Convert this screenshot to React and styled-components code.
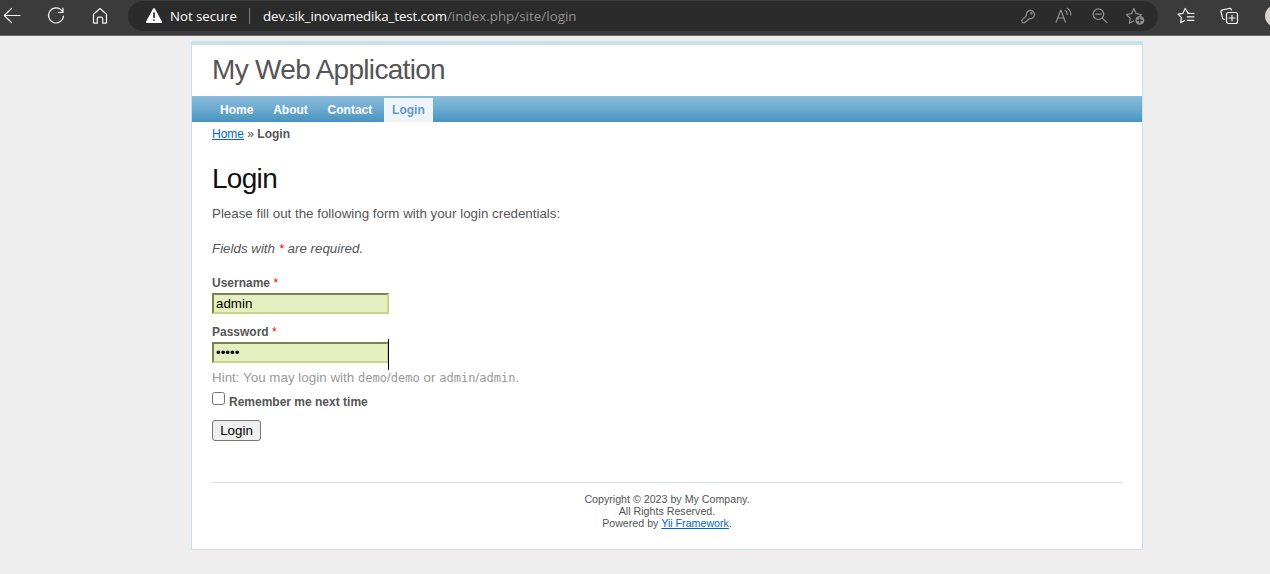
import React from "react";
import styled, { createGlobalStyle } from "styled-components";

const GlobalStyle = createGlobalStyle`
  *, *::before, *::after { box-sizing: border-box; }
  html, body { margin: 0; padding: 0; background: #eeeeee; overflow: hidden; }
  body {
    font: normal 13.333px/18px Arial, "Liberation Sans", sans-serif;
    color: #555555;
  }
`;

const Toolbar = styled.header`
  display: flex;
  align-items: flex-start;
  height: 36px;
  width: 1270px;
  overflow: hidden;
  background: #3b3b3b;
  border-bottom: 1px solid #6a6669;
  color: #ffffff;
`;

const NavIcons = styled.div`
  display: flex;
  gap: 20px;
  width: 128px;
  flex: none;
  padding-top: 4px;
`;

const Icon = styled.svg`
  display: block;
  flex: none;
  width: 24px;
  height: 24px;
  fill: none;
  stroke: ${(p) => p.$color || "#f2f2f2"};
  stroke-width: ${(p) => p.$weight || 1.2};
  stroke-linecap: round;
  stroke-linejoin: round;
`;

const AddressBar = styled.div`
  display: flex;
  flex: none;
  align-items: center;
  width: 1030px;
  height: 30px;
  margin-top: 1px;
  padding: 0 10px 0 14px;
  border-radius: 15px;
  background: #2b2b2b;
  font: 13.3px/20px "Open Sans", "Noto Sans", sans-serif;
`;

const Security = styled.span`
  width: 78px;
  margin-left: 4px;
  white-space: nowrap;
  letter-spacing: -0.06px;
`;

const Separator = styled.span`
  width: 1px;
  height: 16px;
  background: #7b7b7b;
  margin: 0 13px 0 1px;
`;

const Url = styled.span`
  flex: 1;
  white-space: nowrap;
  letter-spacing: -0.1px;
`;

const UrlPath = styled.span`
  color: #929292;
  letter-spacing: 0.05px;
`;

const BarActions = styled.div`
  display: flex;
  gap: 12px;
`;

const BrowserActions = styled.div`
  display: flex;
  flex: none;
  gap: 20px;
  padding: 4px 0 0 16px;
`;

const Avatar = styled.span`
  flex: none;
  width: 22px;
  height: 22px;
  margin-top: 1px;
  margin-left: 3px;
  border-radius: 50%;
  background: #d6d3cf;
`;

const Page = styled.main`
  width: 952px;
  height: 509px;
  margin: 5px 0 0 191px;
  background: #ffffff;
  border: 1px solid #c9e0ed;
  border-top-width: 4px;
`;

const Logo = styled.div`
  height: 51px;
  padding: 9px 20px 0;
  font-size: 28px;
  line-height: 31px;
  letter-spacing: -0.69px;
`;

const Menu = styled.nav`
  display: flex;
  align-items: flex-end;
  height: 26px;
  padding-left: 20px;
  background: linear-gradient(#8abbdb 0%, #6facd0 45%, #4794c1 100%);
`;

const MenuItem = styled.a`
  height: 24px;
  padding: 4px 8px 0;
  margin-right: 3.8px;
  font-size: 12px;
  line-height: 16px;
  font-weight: bold;
  color: ${(p) => (p.$active ? "#6399cd" : "#ffffff")};
  background: ${(p) => (p.$active ? "#eff4fa" : "transparent")};
`;

const Breadcrumbs = styled.div`
  padding: 4px 20px 0;
  height: 32px;
  font-size: 12px;
  line-height: 16px;
`;

const Link = styled.a`
  color: #0066cc;
  text-decoration: underline;
`;

const Content = styled.section`
  height: 328px;
  padding: 8px 20px 0;
`;

const Heading = styled.h1`
  margin: 0;
  height: 43px;
  font-size: 28px;
  line-height: 33px;
  letter-spacing: -0.7px;
  font-weight: normal;
  color: #111111;
`;

const Paragraph = styled.p`
  margin: 0 0 17px;
  font-style: ${(p) => (p.$note ? "italic" : "normal")};
`;

const Fields = styled.form`
  margin-top: -1px;
`;

const Row = styled.div`
  display: flex;
  flex-direction: column;
  align-items: flex-start;
  margin-bottom: ${(p) => p.$gap || 0}px;
`;

const Label = styled.label`
  font-size: 12px;
  line-height: 18px;
  font-weight: bold;
`;

const Required = styled.span`
  color: #ff0000;
  font-weight: normal;
`;

const FieldBox = styled.div`
  position: relative;
  height: 21px;
  margin-top: 1px;
`;

const Input = styled.input`
  display: block;
  width: 177px;
  height: 21px;
  margin: 0;
  padding: 1px 2px;
  border: 2px solid;
  border-color: #7a8450 #c6d880 #c6d880 #7a8450;
  border-radius: 0;
  outline: none;
  background: #e6efc2;
  color: #000000;
  font: 13.333px Arial, "Liberation Sans", sans-serif;
`;

const TextCursor = styled.span`
  position: absolute;
  top: -3px;
  left: 176px;
  width: 1px;
  height: 31px;
  background: #000000;
`;

const Hint = styled.p`
  margin: 6px 0 0;
  color: #999999;
  letter-spacing: 0.03px;
  code {
    font: 12px "DejaVu Sans Mono", monospace;
  }
`;

const CheckRow = styled.div`
  display: flex;
  align-items: flex-start;
  gap: 4px;
  height: 29px;
  margin-top: 5px;
  ${Label} { padding-top: 1px; }
`;

const Checkbox = styled.input`
  width: 13px;
  height: 13px;
  margin: 0;
`;

const Submit = styled.button`
  display: block;
  width: 49px;
  height: 21px;
  margin-top: -1px;
  padding: 0;
  border: 1px solid #767676;
  border-radius: 3px;
  background: #efefef;
  color: #000000;
  font: 13.333px/18px Arial, "Liberation Sans", sans-serif;
`;

const Footer = styled.footer`
  margin: 0 20px;
  padding-top: 10px;
  border-top: 1px solid #c9e0ed;
  font-size: 10.667px;
  line-height: 12px;
  text-align: center;
`;

const dim = "#929292";

const BrowserToolbar = () => (
  <Toolbar>
    <NavIcons>
      <Icon viewBox="0 0 24 24"><path d="M20 11.5H4.5M11.5 4.5l-7.2 7 7.2 7" /></Icon>
      <Icon viewBox="0 0 24 24"><path d="M18.2 7.2A7.5 7.5 0 1 0 19.5 12M19 4v4.5h-4.5" /></Icon>
      <Icon viewBox="0 0 24 24"><path d="M5.5 10.2 12 4.5l6.5 5.7v8.2a.8.8 0 0 1-.8.8h-3v-4.5a1.5 1.5 0 0 0-1.5-1.5h-2.4a1.5 1.5 0 0 0-1.5 1.5v4.5h-3a.8.8 0 0 1-.8-.8z" /></Icon>
    </NavIcons>
    <AddressBar>
      <Icon viewBox="0 0 24 24" $color="none">
        <path fill="#ffffff" d="M11 4.7a1.2 1.2 0 0 1 2 0l6.9 12.7a1.1 1.1 0 0 1-1 1.6H5.1a1.1 1.1 0 0 1-1-1.6z" />
        <path stroke="#2b2b2b" strokeWidth="1.7" d="M12 9v4.2M12 16v.1" />
      </Icon>
      <Security>Not secure</Security>
      <Separator />
      <Url>dev.sik_inovamedika_test.com<UrlPath>/index.php/site/login</UrlPath></Url>
      <BarActions>
        <Icon viewBox="0 0 24 24" $color={dim}>
          <path d="M10.5 11.6a4.1 4.1 0 1 1 3 2.9L9.2 18.2a2 2 0 0 1-3 .1 2 2 0 0 1 .2-2.7z" />
          <circle cx="15.5" cy="9.2" r=".6" />
        </Icon>
        <Icon viewBox="0 0 24 24" $color={dim}>
          <path d="m4.2 18 4.6-12 4.6 12M5.8 14h6M13.3 6.5c1.3 1 1.9 2.2 1.9 4M15.4 4.2c2.2 1.5 3.4 3.8 3.4 6.8" />
        </Icon>
        <Icon viewBox="0 0 24 24" $color={dim}>
          <circle cx="10.4" cy="10.2" r="5.3" /><path d="M7.8 10.2H13M14.3 14.1l4.7 4.5" />
        </Icon>
        <Icon viewBox="0 0 24 24" $color={dim}>
          <path d="m9.6 17-4.2 2.3.8-5.2-3.8-3.6 5.1-.8L9.9 4.5l2.3 5.2 5.2.8-1.5 1.4" />
          <circle cx="15.8" cy="16.3" r="4.4" fill={dim} stroke="none" />
          <path stroke="#2b2b2b" d="M13.3 16.3h5M15.8 13.8v5" />
        </Icon>
      </BarActions>
    </AddressBar>
    <BrowserActions>
      <Icon viewBox="0 0 24 24">
        <path d="M16.5 9.3h-2.2L11.2 4.5 8.8 9.4l-4.8.7 3.5 3.5-.9 5.1 3.7-2M13.8 9.5H20M13.3 12.8H20M13.3 16.3H20" />
      </Icon>
      <Icon viewBox="0 0 24 24">
        <path d="M6.5 15.5c-1 0-1.7-.5-2-1.4L3.1 8.2A2 2 0 0 1 4.5 5.8l6.7-1.3a2 2 0 0 1 2.3 1.5" />
        <rect x="8.5" y="8.5" width="11" height="11" rx="2" />
        <path d="M14 11v6M11 14h6" />
      </Icon>
      <Avatar />
    </BrowserActions>
  </Toolbar>
);

export default function App() {
  return (
    <>
      <GlobalStyle />
      <BrowserToolbar />
      <Page>
        <Logo>My Web Application</Logo>
        <Menu>
          <MenuItem>Home</MenuItem>
          <MenuItem>About</MenuItem>
          <MenuItem>Contact</MenuItem>
          <MenuItem $active>Login</MenuItem>
        </Menu>
        <Breadcrumbs><Link>Home</Link> » <b>Login</b></Breadcrumbs>
        <Content>
          <Heading>Login</Heading>
          <Paragraph>Please fill out the following form with your login credentials:</Paragraph>
          <Paragraph $note>Fields with <Required>*</Required> are required.</Paragraph>
          <Fields>
            <Row $gap={9}>
              <Label htmlFor="username">Username <Required>*</Required></Label>
              <FieldBox><Input id="username" defaultValue="admin" /></FieldBox>
            </Row>
            <Row>
              <Label htmlFor="password">Password <Required>*</Required></Label>
              <FieldBox>
                <Input id="password" type="password" defaultValue="admin" />
                <TextCursor />
              </FieldBox>
              <Hint>Hint: You may login with <code>demo</code>/<code>demo</code> or <code>admin</code>/<code>admin</code>.</Hint>
            </Row>
            <CheckRow>
              <Checkbox id="remember" type="checkbox" />
              <Label htmlFor="remember">Remember me next time</Label>
            </CheckRow>
            <Submit type="button">Login</Submit>
          </Fields>
        </Content>
        <Footer>
          Copyright © 2023 by My Company.<br />
          All Rights Reserved.<br />
          Powered by <Link>Yii Framework</Link>.
        </Footer>
      </Page>
    </>
  );
}
